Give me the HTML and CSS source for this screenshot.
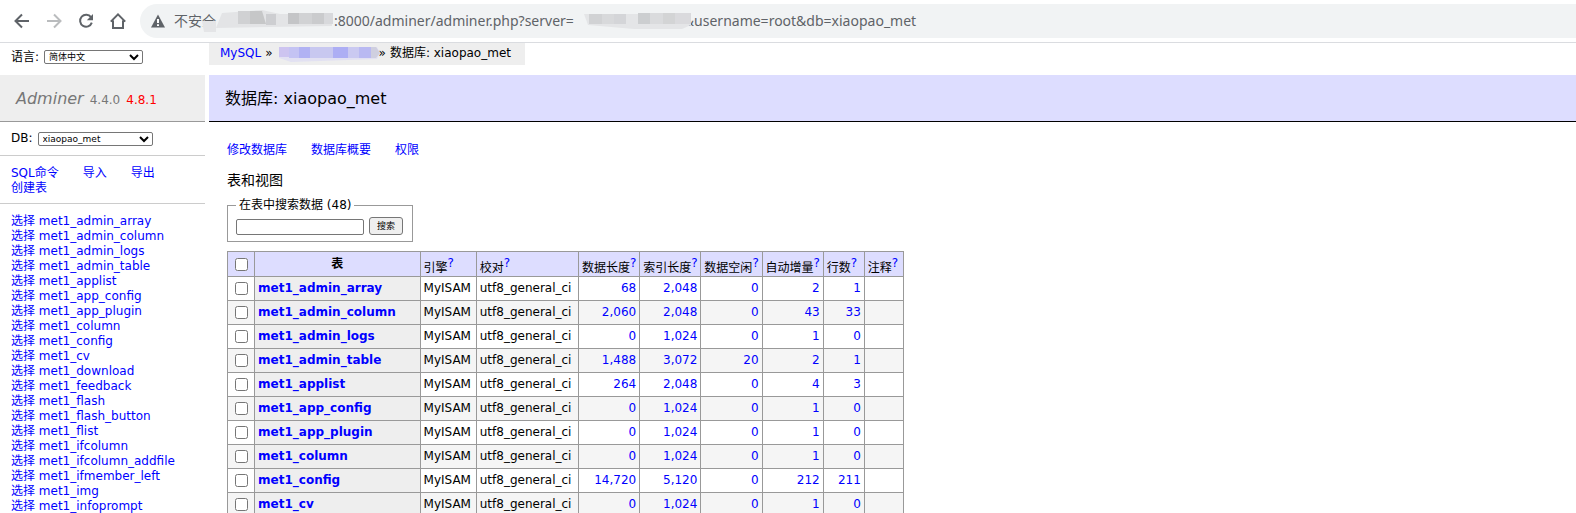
FILE: index.html
```html
<!DOCTYPE html>
<html lang="zh-CN">
<head>
  <meta charset="UTF-8">
  <meta name="viewport" content="width=device-width, initial-scale=1.0">
  <title>数据库: xiaopao_met - Adminer</title>
  <link rel="stylesheet" href="styles.css">
</head>
<body>
  <header class="toolbar">
    <button class="tool" aria-label="后退"><svg width="16" height="16" viewBox="0 0 16 16"><path d="M15 8H2M8 1.5L1.5 8L8 14.5" /></svg></button>
    <button class="tool tool-off" aria-label="前进"><svg width="16" height="16" viewBox="0 0 16 16"><path d="M1 8H14M8 1.5L14.5 8L8 14.5" /></svg></button>
    <button class="tool" aria-label="刷新"><svg width="16" height="16" viewBox="0 0 16 16"><path d="M13 4.2A6 6 0 1 0 13.8 9.7" /><path class="solid" d="M15 1V7.2H8.8Z" /></svg></button>
    <button class="tool" aria-label="主页"><svg width="16" height="16" viewBox="0 0 16 16"><path d="M.8 8.6L8 1.4L15.2 8.6M3 7.5V15H13V7.5" /></svg></button>
    <div class="address">
      <svg class="warn" width="14" height="14" viewBox="0 0 14 14"><path d="M7 .5L14 13.5H0Z" fill="#5f6368" /><path d="M7 5V9M7 10.3V12" stroke="#fff" stroke-width="2" /></svg>
      <span>不安全</span>
      <svg class="mask mask-host" width="132" height="22" viewBox="0 0 132 22">
        <path d="M0 11H14V22H2Z" fill="#e4e5e7" />
        <path d="M20 3L60 0L78 4H130V16L14 18Z" fill="#e3e4e6" />
        <path d="M36 1H48V14H36Z" fill="#d0d1d3" /><path d="M48 1H60L64 14H48Z" fill="#c6c7c8" />
        <path d="M64 4H74V15H64Z" fill="#cdced1" /><path d="M86 3H97V14H86Z" fill="#c4c5c7" />
        <path d="M97 3H110V14H97Z" fill="#d1d2d4" /><path d="M110 3H122V14H110Z" fill="#cacbcd" /><path d="M122 3H131V14H122Z" fill="#d8d9dc" />
      </svg>
      <span>:8000/adminer/adminer.php?server=</span>
      <svg class="mask mask-server" width="108" height="20" viewBox="0 0 108 20">
        <path d="M0 3H107V14L98 18H50L4 14Z" fill="#e4e5e7" />
        <path d="M5 3H18V13H5Z" fill="#d1d2d4" /><path d="M18 3H30V13H18Z" fill="#d8d9db" /><path d="M30 3H42V13H30Z" fill="#d4d5d8" />
        <path d="M54 2H66V13H54Z" fill="#ccced0" /><path d="M66 2H79V13H66Z" fill="#dadbdd" /><path d="M79 2H91V13H79Z" fill="#d3d4d5" /><path d="M91 2H107V13H91Z" fill="#dadadd" />
      </svg>
      <span>&amp;username=root&amp;db=xiaopao_met</span>
    </div>
  </header>

  <div class="page">
    <nav class="menu">
      <form class="lang">
        <label for="lang">语言:</label>
        <select id="lang"><option>简体中文</option></select>
      </form>
      <h1><a href="#" class="brand">Adminer</a> <span>4.4.0</span> <a href="#" class="new">4.8.1</a></h1>
      <form class="db">
        <label for="db">DB:</label>
        <select id="db"><option>xiaopao_met</option></select>
      </form>
      <p class="links actions"><a href="#">SQL命令</a><a href="#">导入</a><a href="#">导出</a><a href="#">创建表</a></p>
      <ul class="tables">
        <li><a href="#">选择</a> <a href="#">met1_admin_array</a></li>
        <li><a href="#">选择</a> <a href="#">met1_admin_column</a></li>
        <li><a href="#">选择</a> <a href="#">met1_admin_logs</a></li>
        <li><a href="#">选择</a> <a href="#">met1_admin_table</a></li>
        <li><a href="#">选择</a> <a href="#">met1_applist</a></li>
        <li><a href="#">选择</a> <a href="#">met1_app_config</a></li>
        <li><a href="#">选择</a> <a href="#">met1_app_plugin</a></li>
        <li><a href="#">选择</a> <a href="#">met1_column</a></li>
        <li><a href="#">选择</a> <a href="#">met1_config</a></li>
        <li><a href="#">选择</a> <a href="#">met1_cv</a></li>
        <li><a href="#">选择</a> <a href="#">met1_download</a></li>
        <li><a href="#">选择</a> <a href="#">met1_feedback</a></li>
        <li><a href="#">选择</a> <a href="#">met1_flash</a></li>
        <li><a href="#">选择</a> <a href="#">met1_flash_button</a></li>
        <li><a href="#">选择</a> <a href="#">met1_flist</a></li>
        <li><a href="#">选择</a> <a href="#">met1_ifcolumn</a></li>
        <li><a href="#">选择</a> <a href="#">met1_ifcolumn_addfile</a></li>
        <li><a href="#">选择</a> <a href="#">met1_ifmember_left</a></li>
        <li><a href="#">选择</a> <a href="#">met1_img</a></li>
        <li><a href="#">选择</a> <a href="#">met1_infoprompt</a></li>
      </ul>
    </nav>

    <main class="content">
      <p class="breadcrumb">
        <a href="#">MySQL</a><span>»</span>
        <svg class="mask mask-crumb" width="106" height="18" viewBox="0 0 106 18">
          <path d="M2 3H100L103 9L100 15L14 18L2 14Z" fill="#e2e1f2" />
          <path d="M2 3H12V13H2Z" fill="#cdc4f0" /><path d="M12 3H22V14H12Z" fill="#c4c3f3" /><path d="M22 3H33V14H22Z" fill="#b1b2f3" />
          <path d="M33 3H56V14H33Z" fill="#c8c8f0" /><path d="M56 3H71V14H56Z" fill="#adaef4" /><path d="M71 3H82V14H71Z" fill="#cac9f1" />
          <path d="M82 3H94V14H82Z" fill="#b9b9f2" /><path d="M94 3H99L103 9L99 14H94Z" fill="#cfcfdf" />
        </svg>
        <span>»</span><span>数据库: xiaopao_met</span>
      </p>
      <h2>数据库: xiaopao_met</h2>
      <div class="body">
        <p class="links"><a href="#">修改数据库</a><a href="#">数据库概要</a><a href="#">权限</a></p>
        <h3>表和视图</h3>
        <form>
          <fieldset>
            <legend>在表中搜索数据 (48)</legend>
            <div class="search">
              <input type="search" aria-label="在表中搜索数据">
              <button type="button">搜索</button>
            </div>
          </fieldset>
          <table>
            <colgroup>
              <col class="c-check"><col class="c-name"><col class="c-engine"><col class="c-collation">
              <col class="c-size"><col class="c-size"><col class="c-size"><col class="c-size"><col class="c-rows"><col class="c-comment">
            </colgroup>
            <thead>
              <tr>
                <td class="check"><input type="checkbox" aria-label="全选"></td><th>表</th>
                <td>引擎<sup><a href="#">?</a></sup></td><td>校对<sup><a href="#">?</a></sup></td>
                <td>数据长度<sup><a href="#">?</a></sup></td><td>索引长度<sup><a href="#">?</a></sup></td>
                <td>数据空闲<sup><a href="#">?</a></sup></td><td>自动增量<sup><a href="#">?</a></sup></td>
                <td>行数<sup><a href="#">?</a></sup></td><td>注释<sup><a href="#">?</a></sup></td>
              </tr>
            </thead>
            <tbody id="rows"></tbody>
          </table>
        </form>
      </div>
    </main>
  </div>

  <script>
    // name, data length, index length, data free, auto increment, rows
    const tables = [
      ['met1_admin_array', '68', '2,048', '0', '2', '1'],
      ['met1_admin_column', '2,060', '2,048', '0', '43', '33'],
      ['met1_admin_logs', '0', '1,024', '0', '1', '0'],
      ['met1_admin_table', '1,488', '3,072', '20', '2', '1'],
      ['met1_applist', '264', '2,048', '0', '4', '3'],
      ['met1_app_config', '0', '1,024', '0', '1', '0'],
      ['met1_app_plugin', '0', '1,024', '0', '1', '0'],
      ['met1_column', '0', '1,024', '0', '1', '0'],
      ['met1_config', '14,720', '5,120', '0', '212', '211'],
      ['met1_cv', '0', '1,024', '0', '1', '0']
    ];

    document.getElementById('rows').innerHTML = tables.map(([name, ...nums]) => `
      <tr>
        <td class="check"><input type="checkbox" aria-label="${name}"></td>
        <th><a href="#">${name}</a></th>
        <td>MyISAM</td>
        <td>utf8_general_ci</td>
        ${nums.map(n => `<td class="num"><a href="#">${n}</a></td>`).join('')}
        <td></td>
      </tr>`).join('');
  </script>
</body>
</html>
```

FILE: styles.css
```css
* {
  box-sizing: border-box;
}

body {
  margin: 0;
  height: 100vh;
  overflow: hidden;
  background: #fff;
  color: #000;
  font: 12px/15px "DejaVu Sans", "Noto Sans CJK SC", sans-serif;
}

a {
  color: blue;
  text-decoration: none;
}

h1, h2, h3, p, ul {
  margin: 0;
  padding: 0;
  font-weight: normal;
}

/* browser toolbar */
.toolbar {
  display: flex;
  align-items: center;
  gap: 16px;
  height: 43px;
  padding: 0 0 0 14px;
  border-bottom: 1px solid #dadce0;
}

.tool {
  display: flex;
  padding: 0;
  border: 0;
  background: none;
}

.tool path {
  fill: none;
  stroke: #5f6368;
  stroke-width: 2;
}

.tool .solid {
  fill: #5f6368;
  stroke: none;
}

.tool-off path {
  stroke: #babcbe;
}

.address {
  display: flex;
  align-items: center;
  flex: 1;
  height: 34px;
  margin-left: -2px;
  padding-left: 11px;
  border-radius: 17px 0 0 17px;
  background: #f1f3f4;
  color: #5f6368;
  font: 14px/22px "Noto Sans", "Noto Sans CJK SC", sans-serif;
  white-space: nowrap;
}

.warn {
  margin-right: 9px;
}

/* blurred-out host names, drawn over the text beside them */
.mask {
  position: relative;
  flex: none;
}

.mask-host {
  margin-left: -14px;
}

.mask-server {
  margin: 0 -8px 0 10px;
}

.mask-crumb {
  margin-right: -8px;
}

/* sidebar */
.page {
  display: flex;
  gap: 4px;
}

.menu {
  flex: none;
  width: 205px;
}

.lang, .db {
  display: flex;
  align-items: center;
  gap: 5px;
  padding: 0 11px;
}

.lang {
  height: 32px;
  padding-bottom: 4px;
}

.db {
  height: 34px;
  border-bottom: 1px solid #ccc;
}

select {
  height: 14px;
  padding: 0;
  border: 1px solid #767676;
  border-radius: 2px;
  background: #fff;
  color: #000;
  font: 9px/12px "DejaVu Sans", "Noto Sans CJK SC", sans-serif;
}

#lang {
  width: 99px;
}

#db {
  width: 115px;
}

h1 {
  display: flex;
  align-items: baseline;
  gap: 6px;
  height: 47px;
  padding: 13px 16px;
  border-bottom: 1px solid #999;
  background: #eee;
  color: #777;
  font-size: 12px;
  line-height: 22px;
}

.brand {
  color: #777;
  font-size: 16px;
  font-style: italic;
}

.new {
  color: red;
}

.links {
  display: flex;
  flex-wrap: wrap;
  column-gap: 24px;
}

.actions {
  padding: 10px 11px 7px;
  border-bottom: 1px solid #ccc;
}

.tables {
  padding: 10px 11px;
  list-style: none;
  white-space: nowrap;
}

/* content */
.content {
  flex: 1;
}

.breadcrumb {
  display: flex;
  align-items: center;
  gap: 4px;
  width: fit-content;
  height: 22px;
  padding: 0 14px 2px 11px;
  background: #eee;
}

h2 {
  height: 47px;
  margin-top: 10px;
  padding: 13px 16px;
  border-bottom: 1px solid #000;
  background: #ddf;
  font-size: 16px;
  line-height: 22px;
}

.body {
  padding: 21px 18px;
}

h3 {
  margin-top: 11px;
  font-size: 14px;
  line-height: 22px;
}

fieldset {
  width: fit-content;
  margin: 7px 0 9px;
  padding: 4px 9px 6px 8px;
  border: 1px solid #999;
}

legend {
  padding: 0 3px;
}

.search {
  display: flex;
  align-items: end;
  gap: 5px;
}

.search input {
  width: 128px;
  height: 16px;
  border: 1px solid #767676;
  border-radius: 2px;
}

.search button {
  width: 34px;
  height: 18px;
  padding: 0;
  border: 1px solid #767676;
  border-radius: 3px;
  background: #efefef;
  color: #000;
  font: 9px/14px "DejaVu Sans", "Noto Sans CJK SC", sans-serif;
}

table {
  width: 677px;
  table-layout: fixed;
  border-collapse: collapse;
}

.c-check { width: 27px; }
.c-name { width: 165px; }
.c-engine { width: 56px; }
.c-collation { width: 102px; }
.c-size { width: 61px; }
.c-rows { width: 41px; }
.c-comment { width: 39px; }

td, th {
  height: 24px;
  padding: 0 3px;
  border: 1px solid #999;
  white-space: nowrap;
}

th {
  background: #eee;
  text-align: left;
}

thead td, thead th {
  height: 25px;
  background: #ddf;
}

thead td {
  vertical-align: bottom;
}

thead th {
  text-align: center;
}

thead .check {
  vertical-align: middle;
}

tbody tr:nth-child(even) td {
  background: #f5f5f5;
}

.num {
  text-align: right;
}

sup {
  font-size: 12px;
  line-height: 0;
}

input[type="checkbox"] {
  display: block;
  width: 13px;
  height: 13px;
  margin: 0 auto;
}
```
